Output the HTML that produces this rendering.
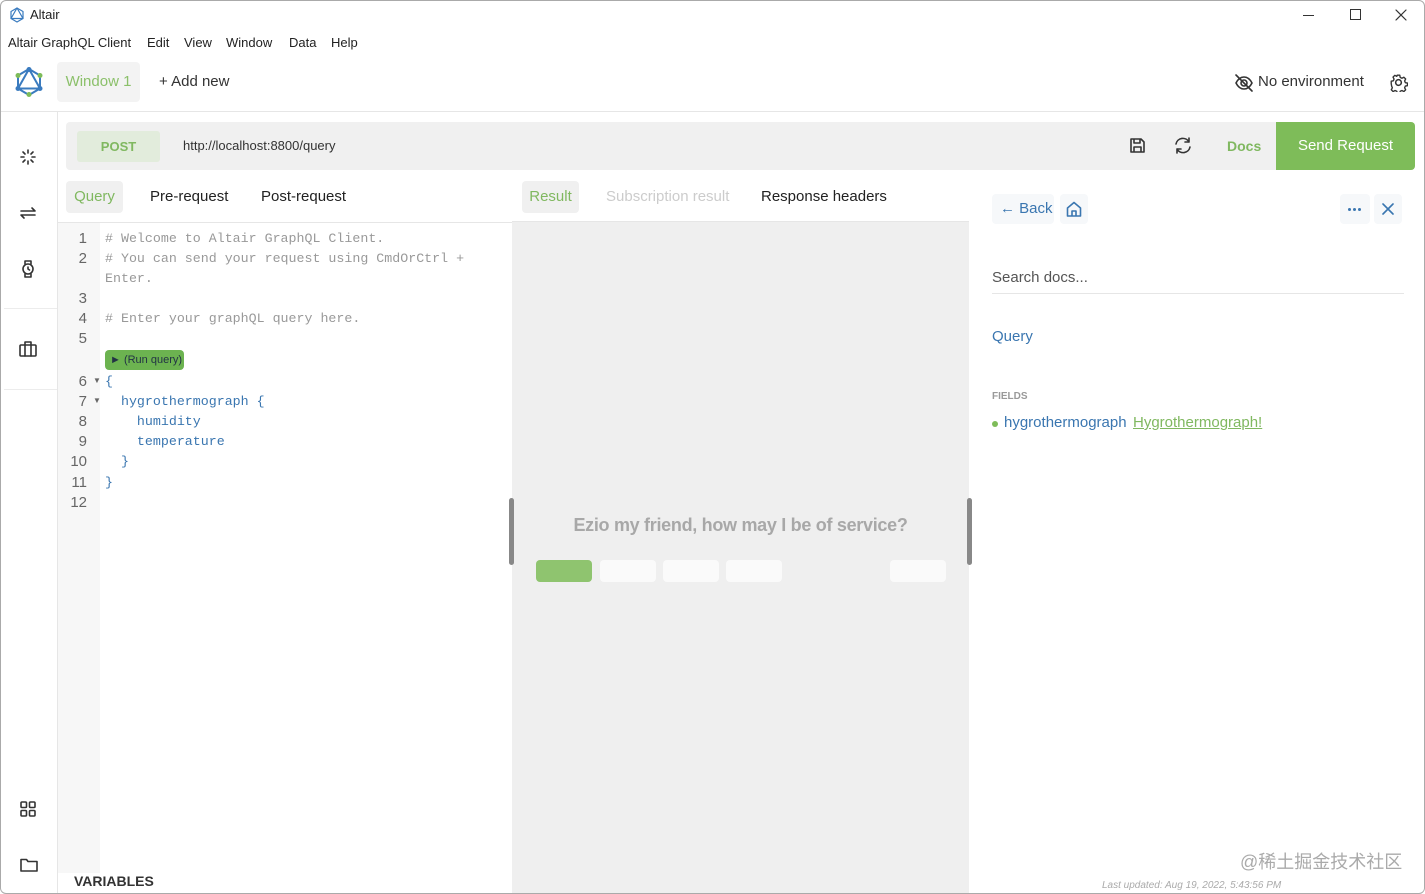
<!DOCTYPE html>
<html><head><meta charset="utf-8"><style>
*{box-sizing:border-box;margin:0;padding:0}
body{width:1425px;height:894px;overflow:hidden;background:#fff;font-family:"Liberation Sans","Noto Sans CJK SC",sans-serif;color:#222;position:relative}
.frame{position:absolute;left:0;top:0;width:1425px;height:894px;border:1px solid #aaa;border-radius:6px;pointer-events:none;z-index:5}
.a{position:absolute}
.mono{font-family:"Liberation Mono","DejaVu Sans Mono",monospace;font-size:13.3px}
svg{position:absolute;fill:none;stroke:#333;stroke-width:1.6;stroke-linecap:round;stroke-linejoin:round}
.ln{position:absolute;left:59px;width:28px;text-align:right;font-size:15px;color:#666}
.cd{position:absolute;left:105px;white-space:pre;color:#999}
.bl{color:#3a76b0}
.m{position:absolute;top:35px;font-size:13px}
</style></head><body>
<div class="frame"></div>
<!-- title bar -->
<svg style="left:9px;top:7px" width="16" height="16" viewBox="0 0 16 16"><path d="M8 1L14 4.5V11.5L8 15L2 11.5V4.5Z" stroke="#3a7bbf" stroke-width="1.2"/><path d="M8 1L2 11.5H14Z" stroke="#3a7bbf" stroke-width="1.2"/></svg>
<div class="a" style="left:30px;top:7px;font-size:13px">Altair</div>
<div class="a" style="left:1303px;top:15px;width:11px;height:1px;background:#333"></div>
<div class="a" style="left:1350px;top:9px;width:11px;height:11px;border:1px solid #333"></div>
<svg style="left:1395px;top:9px" width="12" height="12" viewBox="0 0 12 12"><path d="M1 1L11 11M11 1L1 11" stroke-width="1.2"/></svg>
<!-- menu -->
<div class="m" style="left:8px">Altair GraphQL Client</div>
<div class="m" style="left:147px">Edit</div>
<div class="m" style="left:184px">View</div>
<div class="m" style="left:226px">Window</div>
<div class="m" style="left:289px">Data</div>
<div class="m" style="left:331px">Help</div>
<!-- tab bar -->
<svg style="left:15px;top:67px" width="28" height="30" viewBox="0 0 28 30"><path d="M14 2L25 8.5V21.5L14 28L3 21.5V8.5Z M14 2L3 21.5H25Z" stroke="#3a7bbf" stroke-width="2"/><circle cx="14" cy="2.5" r="2.5" fill="#3a7bbf" stroke="none"/><circle cx="25" cy="8.5" r="2.5" fill="#7ebc59" stroke="none"/><circle cx="3" cy="8.5" r="2.5" fill="#7ebc59" stroke="none"/><circle cx="25" cy="21.5" r="2.5" fill="#3a7bbf" stroke="none"/><circle cx="3" cy="21.5" r="2.5" fill="#3a7bbf" stroke="none"/><circle cx="14" cy="27.5" r="2.5" fill="#7ebc59" stroke="none"/></svg>
<div class="a" style="left:57px;top:62px;width:83px;height:40px;background:#f3f3f3;border-radius:4px;color:#8bc06a;font-size:15px;line-height:40px;text-align:center">Window 1</div>
<div class="a" style="left:159px;top:73px;font-size:15px;color:#333">+ Add new</div>
<svg style="left:1234px;top:73px" width="20" height="20" viewBox="0 0 20 20"><path d="M2 10C4 6 7 4 10 4S16 6 18 10C16 14 13 16 10 16S4 14 2 10Z"/><circle cx="10" cy="10" r="3"/><path d="M2 2L18 18"/></svg>
<div class="a" style="left:1258px;top:73px;font-size:15px;color:#333">No environment</div>
<svg style="left:1389px;top:73px" width="19" height="19" viewBox="0 0 20 20"><circle cx="10" cy="10" r="3"/><path d="M8.5 1.5h3l.5 2.5 2 1 2.3-1.2 2.1 2.1-1.2 2.3.8 2 2.5.5v3l-2.5.5-.8 2 1.2 2.3-2.1 2.1-2.3-1.2-2 .8-.5 2.5h-3l-.5-2.5-2-.8-2.3 1.2-2.1-2.1 1.2-2.3-.8-2L1.5 11.5v-3L4 8l.8-2-1.2-2.3 2.1-2.1L8 2.8z" transform="scale(0.9) translate(1.1 1.1)"/></svg>
<div class="a" style="left:0;top:111px;width:1425px;height:1px;background:#e6e6e6"></div>
<!-- sidebar -->
<div class="a" style="left:57px;top:111px;width:1px;height:783px;background:#e6e6e6"></div>
<div class="a" style="left:4px;top:308px;width:53px;height:1px;background:#ececec"></div>
<div class="a" style="left:4px;top:389px;width:53px;height:1px;background:#ececec"></div>
<svg style="left:20px;top:149px" width="16" height="16" viewBox="0 0 16 16"><path d="M8 1v3M8 12v3M1 8h3M12 8h3M3 3l2 2M11 11l2 2M3 13l2-2M11 5l2-2"/></svg>
<svg style="left:19px;top:204px" width="18" height="18" viewBox="0 0 18 18"><path d="M2 7h14l-3-3M16 11H2l3 3"/></svg>
<svg style="left:21px;top:259px" width="14" height="20" viewBox="0 0 14 20"><circle cx="7" cy="10" r="5"/><path d="M4 5V2h6v3M4 15v3h6v-3M7 8v2l1.5 1"/></svg>
<svg style="left:19px;top:341px" width="18" height="16" viewBox="0 0 18 16"><rect x="1" y="4" width="16" height="11" rx="1"/><path d="M6 4V1h6v3M6 4v11M12 4v11"/></svg>
<svg style="left:20px;top:801px" width="16" height="16" viewBox="0 0 16 16"><rect x="1" y="1" width="5.5" height="5.5" rx="1"/><rect x="9.5" y="1" width="5.5" height="5.5" rx="1"/><rect x="1" y="9.5" width="5.5" height="5.5" rx="1"/><rect x="9.5" y="9.5" width="5.5" height="5.5" rx="1"/></svg>
<svg style="left:20px;top:857px" width="18" height="16" viewBox="0 0 18 16"><path d="M1 2.5V14h16V4.5H8L6.5 2.5Z"/></svg>
<!-- url bar -->
<div class="a" style="left:66px;top:122px;width:1349px;height:48px;background:#f0f0f0;border-radius:4px"></div>
<div class="a" style="left:77px;top:131px;width:83px;height:31px;background:#e2ecdc;border-radius:3px;color:#80b860;font-weight:bold;font-size:13px;line-height:31px;text-align:center">POST</div>
<div class="a" style="left:183px;top:138px;font-size:13px;color:#333">http://localhost:8800/query</div>
<svg style="left:1129px;top:137px" width="17" height="17" viewBox="0 0 17 17"><path d="M2 2h10l3 3v10H2Z M5 2v4h6V2 M5 15v-5h7v5"/></svg>
<svg style="left:1173px;top:136px" width="20" height="19" viewBox="0 0 20 19"><path d="M3 8A7 7 0 0 1 16 6M17 11A7 7 0 0 1 4 13M16 2v4h-4M4 17v-4h4"/></svg>
<div class="a" style="left:1227px;top:138px;font-size:14px;font-weight:bold;color:#80b860">Docs</div>
<div class="a" style="left:1276px;top:122px;width:139px;height:48px;background:#7ebc59;border-radius:0 4px 4px 0;color:#fff;font-size:15px;line-height:48px;text-align:center">Send Request</div>
<!-- query tabs -->
<div class="a" style="left:66px;top:181px;width:57px;height:32px;background:#f0f0f0;border-radius:4px;color:#80b860;font-size:15px;line-height:32px;text-align:center">Query</div>
<div class="a" style="left:150px;top:188px;font-size:15px">Pre-request</div>
<div class="a" style="left:261px;top:188px;font-size:15px">Post-request</div>
<div class="a" style="left:57px;top:222px;width:455px;height:1px;background:#e6e6e6"></div>
<div class="a" style="left:58px;top:223px;width:42px;height:650px;background:#f7f7f7"></div>
<!-- code -->
<div class="ln" style="top:230px">1</div><div class="cd mono" style="top:231px"># Welcome to Altair GraphQL Client.</div>
<div class="ln" style="top:250px">2</div><div class="cd mono" style="top:251px"># You can send your request using CmdOrCtrl +</div>
<div class="cd mono" style="top:271px">Enter.</div>
<div class="ln" style="top:290px">3</div>
<div class="ln" style="top:310px">4</div><div class="cd mono" style="top:311px"># Enter your graphQL query here.</div>
<div class="ln" style="top:330px">5</div>
<div class="a" style="left:105px;top:350px;width:79px;height:20px;background:#6cb350;border-radius:4px;font-size:11px;color:#234;line-height:20px;padding-left:5px">► (Run query)</div>
<div class="ln" style="top:373px">6</div><div class="a" style="left:93px;top:376px;font-size:8px;color:#666">▼</div><div class="cd mono bl" style="top:374px">{</div>
<div class="ln" style="top:393px">7</div><div class="a" style="left:93px;top:396px;font-size:8px;color:#666">▼</div><div class="cd mono bl" style="top:394px">  hygrothermograph {</div>
<div class="ln" style="top:413px">8</div><div class="cd mono bl" style="top:414px">    humidity</div>
<div class="ln" style="top:433px">9</div><div class="cd mono bl" style="top:434px">    temperature</div>
<div class="ln" style="top:453px">10</div><div class="cd mono bl" style="top:454px">  }</div>
<div class="ln" style="top:474px">11</div><div class="cd mono bl" style="top:475px">}</div>
<div class="ln" style="top:494px">12</div>
<div class="a" style="left:74px;top:873px;font-size:14px;font-weight:bold;color:#333">VARIABLES</div>
<!-- result -->
<div class="a" style="left:512px;top:172px;width:457px;height:722px;background:#efefef"></div>
<div class="a" style="left:512px;top:172px;width:457px;height:50px;background:#fff;border-bottom:1px solid #e6e6e6"></div>
<div class="a" style="left:522px;top:181px;width:57px;height:32px;background:#f0f0f0;border-radius:4px;color:#80b860;font-size:15px;line-height:32px;text-align:center">Result</div>
<div class="a" style="left:606px;top:188px;font-size:15px;color:#ccc">Subscription result</div>
<div class="a" style="left:761px;top:188px;font-size:15px">Response headers</div>
<div class="a" style="left:509px;top:498px;width:5px;height:67px;background:#888;border-radius:3px"></div>
<div class="a" style="left:967px;top:498px;width:5px;height:67px;background:#888;border-radius:3px"></div>
<div class="a" style="left:512px;top:515px;width:457px;text-align:center;font-size:18px;font-weight:bold;color:#a8a8a8;letter-spacing:-0.3px">Ezio my friend, how may I be of service?</div>
<div class="a" style="left:536px;top:560px;width:56px;height:22px;background:#8fc46f;border-radius:4px"></div>
<div class="a" style="left:600px;top:560px;width:56px;height:22px;background:#fafafa;border-radius:4px"></div>
<div class="a" style="left:663px;top:560px;width:56px;height:22px;background:#fafafa;border-radius:4px"></div>
<div class="a" style="left:726px;top:560px;width:56px;height:22px;background:#fafafa;border-radius:4px"></div>
<div class="a" style="left:890px;top:560px;width:56px;height:22px;background:#fafafa;border-radius:4px"></div>
<!-- docs -->
<div class="a" style="left:992px;top:194px;width:62px;height:30px;background:#f6f8fa;border-radius:4px;color:#3a76b0;font-size:15px;line-height:30px;padding-left:8px">←&nbsp;Back</div>
<div class="a" style="left:1060px;top:194px;width:28px;height:30px;background:#f6f8fa;border-radius:4px"></div>
<svg style="left:1066px;top:201px;stroke:#3a76b0" width="16" height="16" viewBox="0 0 16 16"><path d="M1.5 7L8 1.5 14.5 7V15h-13Z M6 15v-5h4v5"/></svg>
<div class="a" style="left:1340px;top:194px;width:30px;height:30px;background:#f6f8fa;border-radius:4px"></div>
<div class="a" style="left:1348px;top:208px;width:3px;height:3px;border-radius:2px;background:#3a76b0"></div>
<div class="a" style="left:1353px;top:208px;width:3px;height:3px;border-radius:2px;background:#3a76b0"></div>
<div class="a" style="left:1358px;top:208px;width:3px;height:3px;border-radius:2px;background:#3a76b0"></div>
<div class="a" style="left:1374px;top:194px;width:28px;height:30px;background:#f6f8fa;border-radius:4px"></div>
<svg style="left:1382px;top:203px;stroke:#3a76b0" width="12" height="12" viewBox="0 0 12 12"><path d="M1 1L11 11M11 1L1 11"/></svg>
<div class="a" style="left:992px;top:269px;font-size:15px;color:#555">Search docs...</div>
<div class="a" style="left:992px;top:293px;width:412px;height:1px;background:#e6e6e6"></div>
<div class="a" style="left:992px;top:328px;font-size:15px;color:#3a76b0">Query</div>
<div class="a" style="left:992px;top:391px;font-size:10px;font-weight:bold;color:#999">FIELDS</div>
<div class="a" style="left:992px;top:421px;width:6px;height:6px;border-radius:3px;background:#7ebc59"></div>
<div class="a" style="left:1004px;top:414px;font-size:15px;color:#3a76b0">hygrothermograph</div>
<div class="a" style="left:1133px;top:414px;font-size:15px;color:#80b860;text-decoration:underline">Hygrothermograph!</div>
<div class="a" style="left:1240px;top:848px;font-size:18px;color:#aaa">@稀土掘金技术社区</div>
<div class="a" style="left:1102px;top:880px;font-size:10px;font-style:italic;color:#aaa">Last updated: Aug 19, 2022, 5:43:56 PM</div>
</body></html>
